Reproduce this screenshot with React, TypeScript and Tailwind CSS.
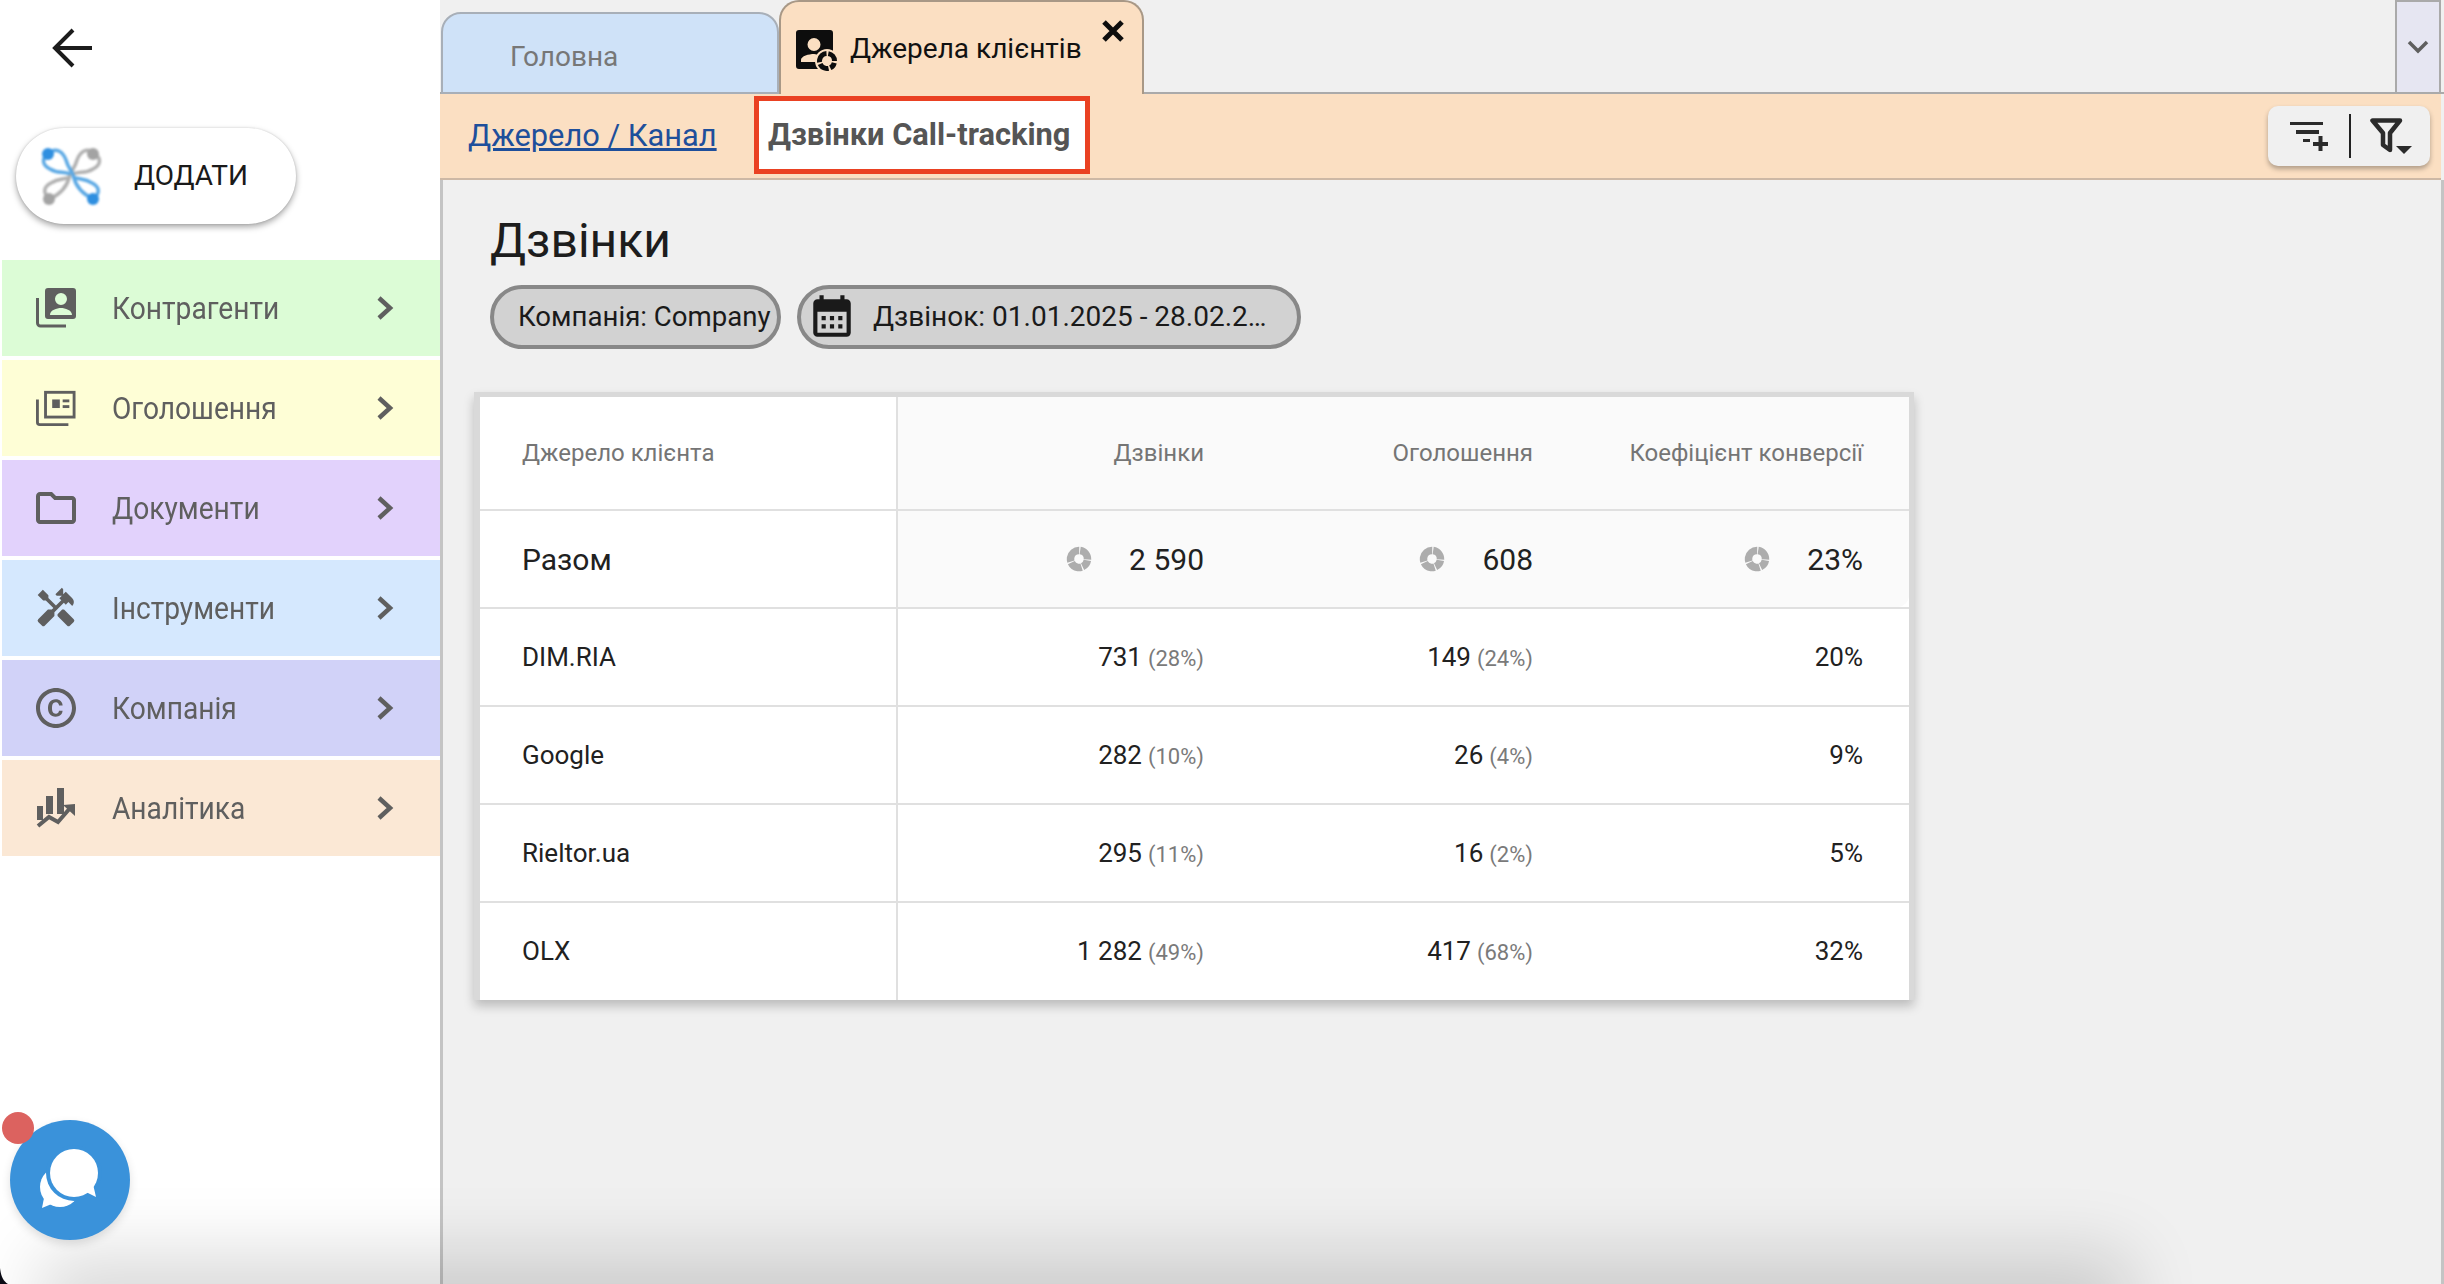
import React from "react";
import { MdHandyman, MdOutlineFolder, MdOutlineCopyright, MdCalendarMonth } from "react-icons/md";

const Chevron = () => (
  <svg width="18" height="26" viewBox="0 0 18 26" className="ml-auto mr-[46px] shrink-0">
    <path d="M3 3 L14 13 L3 23" fill="none" stroke="#5f5f5f" strokeWidth="4.5" />
  </svg>
);

const IconContacts = () => (
  <svg width="40" height="40" viewBox="0 0 40 40" fill="#5f5f5f">
    <path d="M1.5 10 V35 a3 3 0 0 0 3 3 H30" fill="none" stroke="#5f5f5f" strokeWidth="3" />
    <path fillRule="evenodd" d="M12 0h25a3 3 0 0 1 3 3v25a3 3 0 0 1-3 3H12a3 3 0 0 1-3-3V3a3 3 0 0 1 3-3z M25 5a6 6 0 1 0 0 12 6 6 0 0 0 0-12z M14 27h22c0-5-7-7-11-7s-11 2-11 7z" />
  </svg>
);
const IconAds = () => (
  <svg width="42" height="37" viewBox="0 0 42 37" fill="#5f5f5f">
    <path d="M1.5 9 V33 a2.5 2.5 0 0 0 2.5 2.5 H34" fill="none" stroke="#5f5f5f" strokeWidth="3" />
    <rect x="10" y="1.5" width="30" height="26" fill="none" stroke="#5f5f5f" strokeWidth="3" />
    <rect x="17" y="9" width="8" height="9" />
    <rect x="28" y="9" width="7" height="3" />
    <rect x="28" y="15" width="7" height="3" />
  </svg>
);
const IconAnalytics = () => (
  <svg width="40" height="40" viewBox="0 0 40 40" fill="#5f5f5f">
    <rect x="1" y="18" width="6" height="14" />
    <rect x="10" y="8" width="7" height="18" />
    <rect x="21" y="0" width="7" height="26" />
    <path d="M2 38 L13 29 L22 34 L35 19" fill="none" stroke="#5f5f5f" strokeWidth="4" />
    <path d="M27 17 L39 16 L39 28 Z" />
  </svg>
);

const menu = [
  { label: "Контрагенти", bg: "bg-[#dcfcd6]", icon: <IconContacts /> },
  { label: "Оголошення", bg: "bg-[#fefed6]", icon: <IconAds /> },
  { label: "Документи", bg: "bg-[#e2d2fc]", icon: <MdOutlineFolder size={48} color="#5f5f5f" className="-m-1" /> },
  { label: "Інструменти", bg: "bg-[#d5e8fe]", icon: <MdHandyman size={44} color="#5f5f5f" className="-m-0.5" /> },
  { label: "Компанія", bg: "bg-[#d1d2f8]", icon: <MdOutlineCopyright size={48} color="#5f5f5f" className="-m-1" /> },
  { label: "Аналітика", bg: "bg-[#fbe8d5]", icon: <IconAnalytics /> },
];

const Spinner = ({ size = 26, color = "#adadad" }: { size?: number; color?: string }) => (
  <svg width={size} height={size} viewBox="0 0 26 26" className="shrink-0">
    <circle
      cx="13"
      cy="13"
      r="8.5"
      fill="none"
      stroke={color}
      strokeWidth="7.5"
      pathLength={360}
      strokeDasharray="85 7 55 7 83 7 109 7"
      transform="rotate(-82 13 13)"
    />
  </svg>
);

const Logo = () => {
  const strands = (
    <>
      <path d="M20 18 C28 10 35 16 38 24 C40 32 44 34 46 42 C48 50 55 58 65 63" />
      <path d="M20 18 C12 24 16 30 22 33 C30 38 35 35 42 38" />
      <path d="M65 63 C74 56 70 50 64 47 C56 42 52 44 45 41" />
    </>
  );
  return (
    <svg width="90" height="80" viewBox="0 0 90 80" className="shrink-0 blur-[1px]">
      <g transform="translate(87,0) scale(-1,1)" fill="none" stroke="#b0b0b0" strokeWidth="3.5">
        {strands}
      </g>
      <g fill="none" stroke="#5aa8e4" strokeWidth="3.5">
        {strands}
      </g>
      <circle cx="20" cy="18" r="6" fill="#2f8fe0" />
      <circle cx="65" cy="63" r="6" fill="#2f8fe0" />
      <circle cx="65" cy="18" r="6" fill="#a3a3a3" />
      <circle cx="21" cy="63" r="6" fill="#a3a3a3" />
    </svg>
  );
};

const ChatIcon = () => (
  <svg width="120" height="120" viewBox="0 0 120 120">
    <circle cx="50" cy="67" r="20" fill="#fff" />
    <path d="M34 78 L32 88 L44 83 Z" fill="#fff" />
    <circle cx="64" cy="53" r="28" fill="#3a92da" />
    <path d="M72 74 L86 77 L84 64 Z" fill="#3a92da" />
    <circle cx="64" cy="53" r="24" fill="#fff" />
    <path d="M68 72 Q74 75 76 72 L86 77 L83 64 Z" fill="#fff" />
  </svg>
);

const rows = [
  { name: "DIM.RIA", a: "731", ap: "(28%)", b: "149", bp: "(24%)", c: "20%" },
  { name: "Google", a: "282", ap: "(10%)", b: "26", bp: "(4%)", c: "9%" },
  { name: "Rieltor.ua", a: "295", ap: "(11%)", b: "16", bp: "(2%)", c: "5%" },
  { name: "OLX", a: "1 282", ap: "(49%)", b: "417", bp: "(68%)", c: "32%" },
];

const Val = ({ n, p }: { n: string; p?: string }) => (
  <div className="flex items-baseline justify-end gap-[6px] pr-[46px]">
    <span className="text-[26px] text-[#212121]">{n}</span>
    {p && <span className="text-[22px] text-[#7a7a7a]">{p}</span>}
  </div>
);

const Total = ({ n }: { n: string }) => (
  <div className="flex items-center justify-end gap-[37px] pr-[46px]">
    <Spinner />
    <span className="text-[30px] text-[#212121]">{n}</span>
  </div>
);

const Head = ({ t }: { t: string }) => (
  <div className="flex items-center justify-end pr-[46px] text-[24px] text-[#757575]">{t}</div>
);

export default function App() {
  return (
    <div className="relative flex h-[1284px] w-[2444px] overflow-hidden bg-white font-[family-name:Roboto,sans-serif]">
      {/* sidebar */}
      <aside className="flex w-[440px] shrink-0 flex-col pl-[2px]">
        <div className="flex h-[128px] items-start pl-[44px] pt-[22px]">
          <svg width="52" height="52" viewBox="0 0 52 52">
            <path d="M46 26 H10 M27 8 L9 26 L27 44" fill="none" stroke="#1c1c1c" strokeWidth="4" />
          </svg>
        </div>
        <button className="ml-[14px] flex h-[96px] w-[280px] items-center rounded-full bg-white pl-[12px] shadow-[0_3px_6px_rgba(0,0,0,0.35),0_0_2px_rgba(0,0,0,0.15)]">
          <Logo />
          <span className="ml-[16px] text-[28px] text-[#1a1a1a]">ДОДАТИ</span>
        </button>
        <nav className="mt-[36px] flex flex-col gap-[4px]">
          {menu.map((m) => (
            <div key={m.label} className={`flex h-[96px] items-center ${m.bg}`}>
              <div className="ml-[34px] flex w-[40px] items-center justify-center">{m.icon}</div>
              <span className="ml-[36px] origin-left scale-x-[0.88] text-[32px] text-[#5f5f5f]">{m.label}</span>
              <Chevron />
            </div>
          ))}
        </nav>
      </aside>

      {/* main */}
      <main className="flex min-w-0 flex-1 flex-col bg-[#f0f0f0]">
        <div className="flex h-[94px] shrink-0 items-end border-b-2 border-[#aaaaaa]">
          <div className="-mb-[2px] ml-px flex h-[82px] w-[338px] items-center rounded-t-[20px] border-2 border-[#a8afb8] bg-[#cfe2f8] pl-[67px] pt-[8px] text-[28px] text-[#777777]">
            Головна
          </div>
          <div className="relative -mb-[2px] flex h-[94px] w-[365px] items-start rounded-t-[20px] border-2 border-b-0 border-[#a89886] bg-[#fbdfc2] pl-[14px] pt-[27px]">
            <svg width="44" height="44" viewBox="0 0 44 44" className="shrink-0">
              <path fillRule="evenodd" d="M4 1h31a3 3 0 0 1 3 3v33a3 3 0 0 1-3 3H4a3 3 0 0 1-3-3V4a3 3 0 0 1 3-3z M19 9a6.5 6.5 0 1 0 0 13 6.5 6.5 0 0 0 0-13z M6 33h20v-4c-2-3-5-4-7-4-5 0-13 2-13 6z" fill="#0d0d0d" />
              <circle cx="32" cy="32" r="12" fill="#fbdfc2" />
              <circle cx="32" cy="32" r="7.5" fill="none" stroke="#0d0d0d" strokeWidth="5" pathLength={360} strokeDasharray="80 14 50 14 78 14 96 14" transform="rotate(-80 32 32)" />
            </svg>
            <span className="-mt-[2px] ml-[11px] text-[28px] leading-[44px] text-[#111111]">Джерела клієнтів</span>
            <span className="absolute right-[16px] top-[16px] text-[0px]">
              <svg width="26" height="26" viewBox="0 0 26 26">
                <path d="M4 4 L22 22 M22 4 L4 22" stroke="#0d0d0d" strokeWidth="5" />
              </svg>
            </span>
          </div>
          <div className="ml-auto mr-[3px] flex h-[92px] w-[46px] items-center justify-center self-start border-2 border-b-0 border-[#aaaaaa] bg-[#e6e6f2]">
            <svg width="22" height="14" viewBox="0 0 22 14">
              <path d="M2 2 L11 11 L20 2" fill="none" stroke="#5f5f5f" strokeWidth="3.5" />
            </svg>
          </div>
        </div>

        <div className="mr-[3px] flex h-[86px] shrink-0 items-center border-b-2 border-[#cdb8a5] bg-[#fbdfc2] pl-[28px] pr-[11px]">
          <a className="w-[250px] shrink-0 text-[30.8px] whitespace-nowrap text-[#1e4f9b] underline">Джерело / Канал</a>
          <div className="-mt-[2px] ml-[36px] flex h-[78px] w-[336px] items-center border-[5px] border-[#ea4122] bg-white pl-[9px] pt-[1px]">
            <span className="whitespace-nowrap text-[30.8px] font-bold text-[#555555]">Дзвінки Call-tracking</span>
          </div>
          <div className="ml-auto flex h-[60px] w-[162px] items-center rounded-[10px] bg-[#f0f0f0] shadow-[0_3px_5px_rgba(0,0,0,0.3)]">
            <div className="flex w-[81px] justify-center pt-[4px]">
              <svg width="38" height="36" viewBox="0 0 38 36" fill="#2b2b2b">
                <rect x="0" y="2" width="33" height="3" />
                <rect x="6" y="10" width="23" height="4" />
                <rect x="13" y="19" width="7" height="3" />
                <rect x="23" y="22" width="15" height="4" />
                <rect x="28.5" y="16" width="4" height="15" />
              </svg>
            </div>
            <div className="h-[44px] w-[2px] bg-[#222222]" />
            <div className="flex flex-1 justify-center">
              <svg width="42" height="36" viewBox="0 0 42 36" fill="none">
                <path d="M2.5 2.5 H30 L20 15 V32 L13 27 V15 Z" stroke="#2b2b2b" strokeWidth="4.5" strokeLinejoin="round" />
                <path d="M26 28 H42 L34 36 Z" fill="#2b2b2b" />
              </svg>
            </div>
          </div>
        </div>

        <div className="flex flex-1 flex-col border-x-[3px] border-x-[#c4c4c4]">
          <h1 className="ml-[47px] mt-[31px] text-[48px] font-normal leading-[60px] text-[#1d1d1d]">Дзвінки</h1>
          <div className="ml-[47px] mt-[14px] flex gap-[16px]">
            <div className="flex h-[64px] w-[291px] items-center rounded-full border-4 border-[#888888] bg-[#d2d2d2] pl-[24px] text-[27.6px] whitespace-nowrap text-[#1a1a1a]">
              Компанія: Company
            </div>
            <div className="flex h-[64px] w-[504px] items-center rounded-full border-4 border-[#888888] bg-[#d2d2d2] pl-[12px] text-[28px] whitespace-nowrap text-[#1a1a1a]">
              <MdCalendarMonth size={50} color="#1a1a1a" className="-ml-[6px] -mt-[3px] shrink-0" />
              <span className="ml-[16px]">Дзвінок: 01.01.2025 - 28.02.2…</span>
            </div>
          </div>

          <div className="ml-[31px] mt-[43px] w-[1440px] border-t-[5px] border-r-[5px] border-l-[6px] border-[#d9d9d9] bg-white shadow-[0_6px_10px_rgba(0,0,0,0.22)]">
            <div className="grid h-[114px] grid-cols-[418px_352px_329px_330px] border-b-2 border-[#e0e0e0]">
              <div className="flex items-center border-r-2 border-[#e0e0e0] pl-[42px] text-[24px] text-[#757575]">Джерело клієнта</div>
              <div className="col-span-3 grid grid-cols-[352px_329px_330px] bg-[#fafafa]">
                <Head t="Дзвінки" />
                <Head t="Оголошення" />
                <Head t="Коефіцієнт конверсії" />
              </div>
            </div>
            <div className="grid h-[98px] grid-cols-[418px_1011px] border-b-2 border-[#e0e0e0]">
              <div className="flex items-center border-r-2 border-[#e0e0e0] pl-[42px] text-[30px] text-[#212121]">Разом</div>
              <div className="grid grid-cols-[352px_329px_330px] rounded-br-[12px] bg-[#fafafa]">
                <Total n="2 590" />
                <Total n="608" />
                <Total n="23%" />
              </div>
            </div>
            {rows.map((r, i) => (
              <div key={r.name} className={`grid grid-cols-[418px_352px_329px_330px] items-stretch ${i < 3 ? "h-[98px] border-b-2 border-[#e0e0e0]" : "h-[97px]"}`}>
                <div className="flex items-center border-r-2 border-[#e0e0e0] pl-[42px] text-[26px] text-[#212121]">{r.name}</div>
                <div className="flex items-center justify-end"><Val n={r.a} p={r.ap} /></div>
                <div className="flex items-center justify-end"><Val n={r.b} p={r.bp} /></div>
                <div className="flex items-center justify-end"><Val n={r.c} /></div>
              </div>
            ))}
          </div>
        </div>
      </main>

      {/* chat bubble */}
      <div className="absolute left-[10px] top-[1120px] z-20 h-[120px] w-[120px] rounded-full bg-[#3a92da] shadow-[0_4px_10px_rgba(0,0,0,0.12)]">
        <ChatIcon />
      </div>
      <div className="absolute left-[2px] top-[1112px] z-30 h-[32px] w-[32px] rounded-full bg-[#dc625f]" />

      {/* window shadow at the bottom edge */}
      <div className="pointer-events-none absolute -bottom-[40px] left-[70px] z-10 h-[40px] w-[2030px] shadow-[0_0_70px_30px_rgba(0,0,0,0.15)]" />
      <svg width="8" height="16" viewBox="0 0 8 16" className="pointer-events-none absolute bottom-0 left-0 z-30">
        <path d="M0 0 C1 8 3 13 8 16 H0 Z" fill="#0a0a14" />
      </svg>
    </div>
  );
}
